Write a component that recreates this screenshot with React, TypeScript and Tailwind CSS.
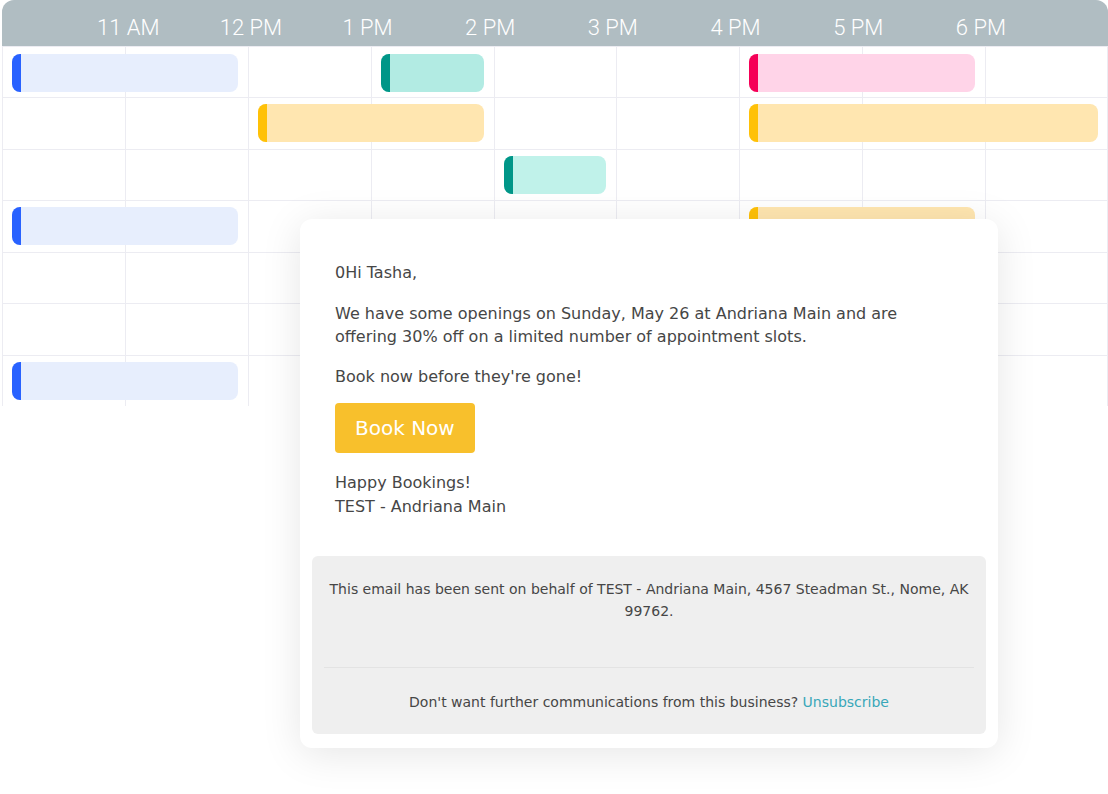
import React from "react";

type Tone = "blue" | "teal" | "tealLight" | "pink" | "yellow";

type Event = { row: number; start: number; span: number; tone: Tone };

const tones: Record<Tone, { bg: string; bar: string }> = {
  blue: { bg: "bg-[#e7eefd]", bar: "bg-[#2962ff]" },
  teal: { bg: "bg-[#b2ebe3]", bar: "bg-[#009688]" },
  tealLight: { bg: "bg-[#c0f2ea]", bar: "bg-[#009688]" },
  pink: { bg: "bg-[#ffd4e8]", bar: "bg-[#f50057]" },
  yellow: { bg: "bg-[#ffe6b0]", bar: "bg-[#ffc107]" },
};

const startClass = [
  "col-start-1",
  "col-start-2",
  "col-start-3",
  "col-start-4",
  "col-start-5",
  "col-start-6",
  "col-start-7",
  "col-start-8",
  "col-start-9",
];

const spanClass = ["col-span-1", "col-span-1", "col-span-2", "col-span-3"];

const hours = ["11 AM", "12 PM", "1 PM", "2 PM", "3 PM", "4 PM", "5 PM", "6 PM"];

const events: Event[] = [
  { row: 0, start: 0, span: 2, tone: "blue" },
  { row: 0, start: 3, span: 1, tone: "teal" },
  { row: 0, start: 6, span: 2, tone: "pink" },
  { row: 1, start: 2, span: 2, tone: "yellow" },
  { row: 1, start: 6, span: 3, tone: "yellow" },
  { row: 2, start: 4, span: 1, tone: "tealLight" },
  { row: 3, start: 0, span: 2, tone: "blue" },
  { row: 3, start: 6, span: 2, tone: "yellow" },
  { row: 6, start: 0, span: 2, tone: "blue" },
];

function EventBar({ ev }: { ev: Event }) {
  const t = tones[ev.tone];
  const offset = ev.row === 0 ? "mt-[7px]" : "mt-[6px]";
  return (
    <div
      className={`${startClass[ev.start]} ${spanClass[ev.span]} row-start-1 self-start ${offset} mx-[10px] h-[38px] rounded-[8px] overflow-hidden flex ${t.bg}`}
    >
      <div className={`w-[9px] h-full ${t.bar}`} />
    </div>
  );
}

function CalendarRow({ index }: { index: number }) {
  const rowEvents = events.filter((e) => e.row === index);
  return (
    <div className="grid grid-cols-9 h-[51.43px] border-t border-[#ececf2]">
      {Array.from({ length: 9 }).map((_, i) => (
        <div
          key={i}
          className={`${startClass[i]} row-start-1 border-l border-[#ececf2] ${i === 8 ? "border-r" : ""}`}
        />
      ))}
      {rowEvents.map((ev, i) => (
        <EventBar key={i} ev={ev} />
      ))}
    </div>
  );
}

function Calendar() {
  return (
    <div className="ml-[2px] w-[1106px]">
      <div
        className="h-[46px] bg-[#b0bdc2] rounded-t-[12px] flex items-center pt-[9px] pl-[95px] text-white font-light text-[22px]"
        style={{ fontFamily: "Roboto, 'Liberation Sans', sans-serif" }}
      >
        {hours.map((h) => (
          <div key={h} className="w-[122.7px] text-left">
            {h}
          </div>
        ))}
      </div>
      {Array.from({ length: 7 }).map((_, i) => (
        <CalendarRow key={i} index={i} />
      ))}
    </div>
  );
}

function EmailCard() {
  return (
    <div
      className="absolute left-[300px] top-[219px] w-[698px] bg-white rounded-[12px] shadow-[0_6px_40px_rgba(0,0,0,0.10)] px-[12px] pb-[14px] text-[#464646]"
      style={{ fontFamily: "'DejaVu Sans', Verdana, sans-serif" }}
    >
      <div className="px-[23px] pt-[42px] text-[16px] leading-[23px]">
        <p>0Hi Tasha,</p>
        <p className="mt-[18px]">
          We have some openings on Sunday, May 26 at Andriana Main and are offering 30% off on a limited
          number of appointment slots.
        </p>
        <p className="mt-[17px]">Book now before they're gone!</p>
        <div className="mt-[15px] inline-flex h-[50px] items-center px-[20px] rounded-[4px] bg-[#f8c02c] text-white text-[20px]">
          Book Now
        </div>
        <p className="mt-[18px] leading-[24px]">
          Happy Bookings!
          <br />
          TEST - Andriana Main
        </p>
      </div>
      <div className="mt-[37px] bg-[#efefef] rounded-[6px] px-[12px] pt-[22px] pb-[21px] text-[14px] leading-[22px] text-center">
        <p className="pb-[45px] border-b border-[#e3e3e3]">
          This email has been sent on behalf of TEST - Andriana Main, 4567 Steadman St., Nome, AK 99762.
        </p>
        <p className="pt-[23px]">
          Don't want further communications from this business?{" "}
          <span className="text-[#38a7b9]">Unsubscribe</span>
        </p>
      </div>
    </div>
  );
}

export default function App() {
  return (
    <div className="relative w-[1108px] h-[794px] bg-white overflow-hidden">
      <Calendar />
      <EmailCard />
    </div>
  );
}
